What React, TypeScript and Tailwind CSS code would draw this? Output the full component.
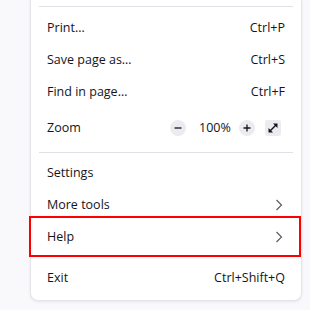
import React from 'react';

const Chevron: React.FC = () => (
  <svg width="8" height="12" viewBox="0 0 8 12" fill="none" className="text-[#5b5b66]">
    <path d="M1.5 1 L6.5 6 L1.5 11" stroke="currentColor" strokeWidth="1.2" />
  </svg>
);

const MenuRow: React.FC<{ label: string; shortcut?: string; sub?: boolean; boxed?: boolean }> = ({
  label,
  shortcut,
  sub,
  boxed,
}) => (
  <div className="relative flex h-[32px] items-center justify-between pl-[16px] pr-[16px]">
    <span>{label}</span>
    {shortcut && <span>{shortcut}</span>}
    {sub && (
      <span className="mr-[2px] flex items-center">
        <Chevron />
      </span>
    )}
    {boxed && <div className="absolute -top-[5px] -bottom-[4px] -left-[2px] right-0 border-2 border-[#ff0000]"></div>}
  </div>
);

const App: React.FC = () => {
  return (
    <div
      className="h-[310px] w-[310px] overflow-hidden bg-[#f9f9fb] text-[12.5px] text-[#15141a]"
      style={{ fontFamily: '"Open Sans", "Noto Sans", sans-serif' }}
    >
      <div className="ml-[30px] w-[272px] rounded-b-[8px] border border-t-0 border-[#e4e4e9] bg-white pt-[6px] pb-[6px] shadow-[0_1px_3px_rgba(0,0,0,0.08)]">
        <div className="mx-[8px] h-px bg-[#e0e0e6]"></div>
        <div className="mt-[5px]">
          <MenuRow label="Print…" shortcut="Ctrl+P" />
          <MenuRow label="Save page as…" shortcut="Ctrl+S" />
          <MenuRow label="Find in page…" shortcut="Ctrl+F" />
          <div className="flex h-[40px] items-center justify-between pl-[16px] pr-[20px]">
            <span>Zoom</span>
            <div className="flex items-center">
              <span className="flex h-[16px] w-[16px] items-center justify-center rounded-full bg-[#ececf0]">
                <svg width="10" height="10" viewBox="0 0 10 10">
                  <path d="M1.5 5 H8.5" stroke="#15141a" strokeWidth="1.3" />
                </svg>
              </span>
              <span className="ml-[13px] w-[28px] text-center">100%</span>
              <span className="ml-[12px] flex h-[16px] w-[16px] items-center justify-center rounded-full bg-[#ececf0]">
                <svg width="10" height="10" viewBox="0 0 10 10">
                  <path d="M1.5 5 H8.5 M5 1.5 V8.5" stroke="#15141a" strokeWidth="1.3" />
                </svg>
              </span>
              <span className="ml-[10px] flex h-[16px] w-[16px] items-center justify-center rounded-[2px] bg-[#ececf0]">
                <svg width="12" height="12" viewBox="0 0 12 12">
                  <path d="M2.5 9.5 L9.5 2.5" stroke="#15141a" strokeWidth="1.4" />
                  <path d="M1.5 6 V10.5 H6 Z" fill="#15141a" />
                  <path d="M6 1.5 H10.5 V6 Z" fill="#15141a" />
                </svg>
              </span>
            </div>
          </div>
        </div>
        <div className="mx-[8px] mt-[4px] h-px bg-[#e0e0e6]"></div>
        <div className="mt-[4px]">
          <MenuRow label="Settings" />
          <MenuRow label="More tools" sub />
          <MenuRow label="Help" sub boxed />
        </div>
        <div className="mt-[9px]">
          <MenuRow label="Exit" shortcut="Ctrl+Shift+Q" />
        </div>
      </div>
    </div>
  );
};

export default App;
